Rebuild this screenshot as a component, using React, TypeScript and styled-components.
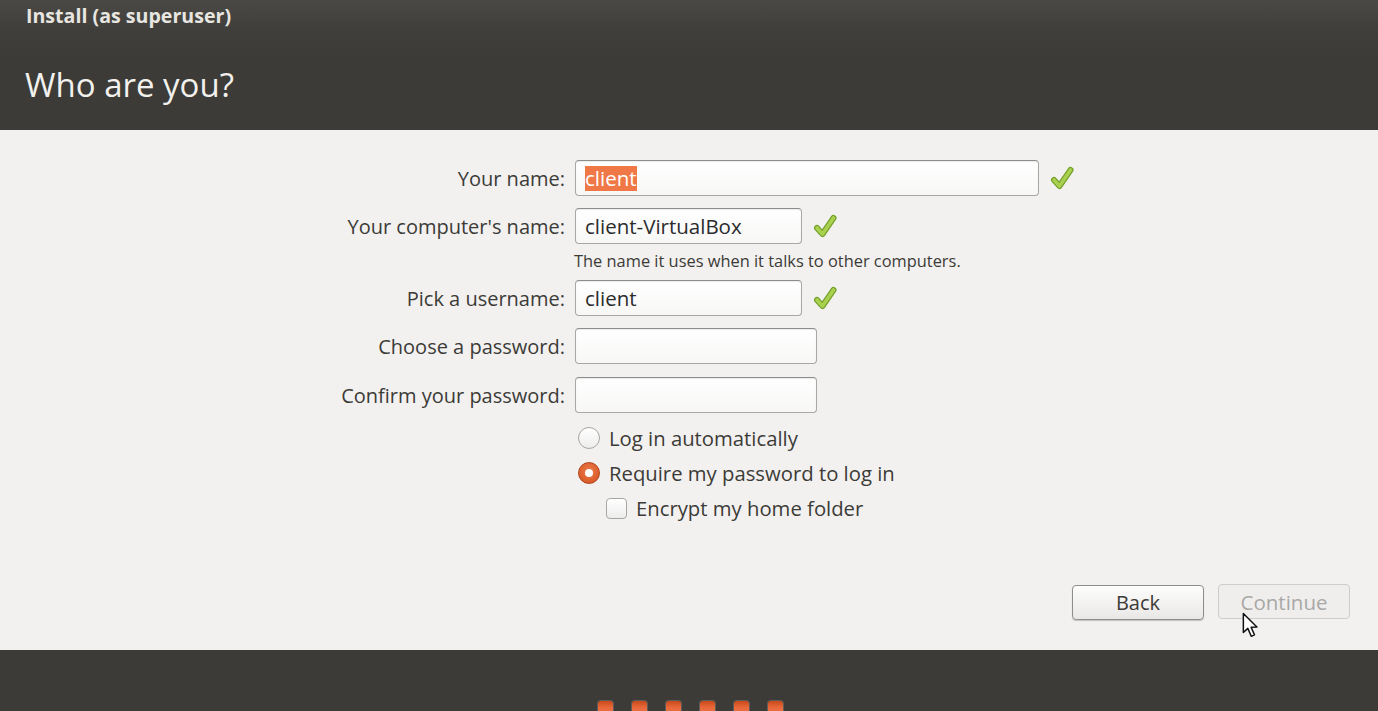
import React from "react";
import styled, { createGlobalStyle } from "styled-components";

const Global = createGlobalStyle`
  html, body { margin: 0; padding: 0; height: 100%; overflow: hidden; }
  body { font-family: "Open Sans", "Noto Sans", sans-serif; background: #3c3b37; }
  * { box-sizing: border-box; }
`;

const Page = styled.div`
  width: 1378px;
  height: 711px;
  display: flex;
  flex-direction: column;
  position: relative;
  overflow: hidden;
`;

const Header = styled.header`
  flex-shrink: 0;
  height: 130px;
  background: linear-gradient(#4b4945 0px, #3f3e3a 30px, #3c3b37 60px);
  display: flex;
  flex-direction: column;
  padding-left: 26px;
`;

const WindowTitle = styled.div`
  font-weight: 700;
  font-size: 19.6px;
  color: #e8e6e1;
  line-height: 24px;
  margin-top: 4px;
`;

const PageTitle = styled.h1`
  margin: 37px 0 0 -1px;
  font-weight: 400;
  font-size: 33px;
  line-height: 40px;
  color: #f2f1ee;
`;

const Body = styled.main`
  flex-shrink: 0;
  height: 520px;
  background: #f2f1f0;
  display: flex;
  flex-direction: column;
  justify-content: space-between;
`;

const Form = styled.div`
  display: flex;
  flex-direction: column;
  padding-top: 30px;
`;

const Row = styled.div<{ $mt?: number }>`
  display: grid;
  grid-template-columns: 565px auto;
  column-gap: 10px;
  align-items: center;
  margin-top: ${(p) => p.$mt ?? 0}px;
`;

const Label = styled.label`
  text-align: right;
  font-size: 20px;
  color: #3c3b37;
`;

const FieldWrap = styled.div`
  display: flex;
  align-items: center;
  gap: 10px;
`;

const Input = styled.div<{ $w: number }>`
  width: ${(p) => p.$w}px;
  height: 36px;
  border: 1px solid #a9a7a3;
  border-top-color: #8f8d89;
  border-radius: 4px;
  background: linear-gradient(#ffffff, #f7f7f6);
  box-shadow: inset 0 1px 1px rgba(0, 0, 0, 0.08);
  display: flex;
  align-items: center;
  padding-left: 9px;
  font-size: 20.5px;
  color: #2c2c2c;
`;

const Selected = styled.span`
  background: #f07746;
  color: #ffffff;
  line-height: 25px;
`;

const Hint = styled.div`
  grid-column: 2;
  font-size: 16.4px;
  color: #3c3b37;
  margin-left: -1px;
  line-height: 20px;
`;

const OptionRow = styled.div<{ $indent?: number; $mt: number }>`
  display: flex;
  align-items: center;
  gap: 9px;
  margin-left: ${(p) => 578 + (p.$indent ?? 0)}px;
  margin-top: ${(p) => p.$mt}px;
  font-size: 20.3px;
  color: #3c3b37;
  height: 22px;
`;

const Radio = styled.span<{ $on?: boolean }>`
  width: 22px;
  height: 22px;
  border-radius: 50%;
  display: flex;
  align-items: center;
  justify-content: center;
  border: 1px solid ${(p) => (p.$on ? "#b1431c" : "#a8a6a2")};
  background: ${(p) =>
    p.$on ? "radial-gradient(circle at 50% 40%, #ee7a4a, #d1521f)" : "linear-gradient(#ffffff, #ededec)"};
  &::after {
    content: "";
    display: ${(p) => (p.$on ? "block" : "none")};
    width: 8px;
    height: 8px;
    border-radius: 50%;
    background: #ffffff;
  }
`;

const Checkbox = styled.span`
  width: 21px;
  height: 21px;
  border-radius: 4px;
  border: 1px solid #a8a6a2;
  background: linear-gradient(#ffffff, #ededec);
`;

const ButtonBar = styled.div`
  display: flex;
  justify-content: flex-end;
  gap: 14px;
  padding: 0 28px 30px 0;
  align-items: flex-end;
`;

const Button = styled.div<{ $disabled?: boolean }>`
  width: 132px;
  height: 35px;
  border-radius: 4px;
  display: flex;
  align-items: center;
  justify-content: center;
  font-size: ${(p) => (p.$disabled ? 20.5 : 20)}px;
  border: 1px solid ${(p) => (p.$disabled ? "#cfcdca" : "#8f8d89")};
  color: ${(p) => (p.$disabled ? "#a9a8a6" : "#3c3b37")};
  background: ${(p) => (p.$disabled ? "#efeeed" : "linear-gradient(#fdfdfc, #e9e8e6)")};
  box-shadow: ${(p) => (p.$disabled ? "none" : "0 1px 1px rgba(0,0,0,0.2)")};
  margin-bottom: ${(p) => (p.$disabled ? 1 : 0)}px;
`;

const Footer = styled.footer`
  flex: 1 0 auto;
  background: #3c3b37;
  display: flex;
  justify-content: center;
  gap: 19px;
  padding-top: 51px;
  padding-left: 3px;
`;

const Dot = styled.span`
  width: 15px;
  height: 16px;
  border-radius: 3px;
  background: linear-gradient(#c9491b, #e8683a 40%, #ed7a4c);
  box-shadow: 0 0 0 1px rgba(110, 108, 104, 0.7);
`;

const Cursor = styled.svg`
  position: absolute;
  left: 1242px;
  top: 612px;
`;

const Check = () => (
  <svg width="26" height="24" viewBox="0 0 26 24">
    <path d="M5 14 L10.5 20 L21.5 4" fill="none" stroke="#74a02a" strokeWidth="6" strokeLinecap="round" strokeLinejoin="round" />
    <path d="M5 14 L10.5 20 L21.5 4" fill="none" stroke="#a9d04e" strokeWidth="3.6" strokeLinecap="round" strokeLinejoin="round" />
  </svg>
);

export default function App() {
  return (
    <>
      <Global />
      <Page>
        <Header>
          <WindowTitle>Install (as superuser)</WindowTitle>
          <PageTitle>Who are you?</PageTitle>
        </Header>
        <Body>
          <Form>
            <Row>
              <Label>Your name:</Label>
              <FieldWrap>
                <Input $w={464}>
                  <Selected>client</Selected>
                </Input>
                <Check />
              </FieldWrap>
            </Row>
            <Row $mt={12}>
              <Label>Your computer's name:</Label>
              <FieldWrap>
                <Input $w={227}>client-VirtualBox</Input>
                <Check />
              </FieldWrap>
            </Row>
            <Row $mt={7}>
              <span />
              <Hint>The name it uses when it talks to other computers.</Hint>
            </Row>
            <Row $mt={9}>
              <Label>Pick a username:</Label>
              <FieldWrap>
                <Input $w={227}>client</Input>
                <Check />
              </FieldWrap>
            </Row>
            <Row $mt={12}>
              <Label>Choose a password:</Label>
              <FieldWrap>
                <Input $w={242} />
              </FieldWrap>
            </Row>
            <Row $mt={13}>
              <Label>Confirm your password:</Label>
              <FieldWrap>
                <Input $w={242} />
              </FieldWrap>
            </Row>
            <OptionRow $mt={14}>
              <Radio />
              <span>Log in automatically</span>
            </OptionRow>
            <OptionRow $mt={13}>
              <Radio $on />
              <span>Require my password to log in</span>
            </OptionRow>
            <OptionRow $mt={13} $indent={28}>
              <Checkbox />
              <span>Encrypt my home folder</span>
            </OptionRow>
          </Form>
          <ButtonBar>
            <Button>Back</Button>
            <Button $disabled>Continue</Button>
          </ButtonBar>
        </Body>
        <Footer>
          <Dot />
          <Dot />
          <Dot />
          <Dot />
          <Dot />
          <Dot />
        </Footer>
        <Cursor width="19" height="26" viewBox="0 0 14 19">
          <path d="M1 1 L1 15 L4.3 12 L6.8 17.8 L9.2 16.8 L6.7 11.2 L11 11 Z" fill="#ffffff" stroke="#111" strokeWidth="1.1" strokeLinejoin="round" />
        </Cursor>
      </Page>
    </>
  );
}
